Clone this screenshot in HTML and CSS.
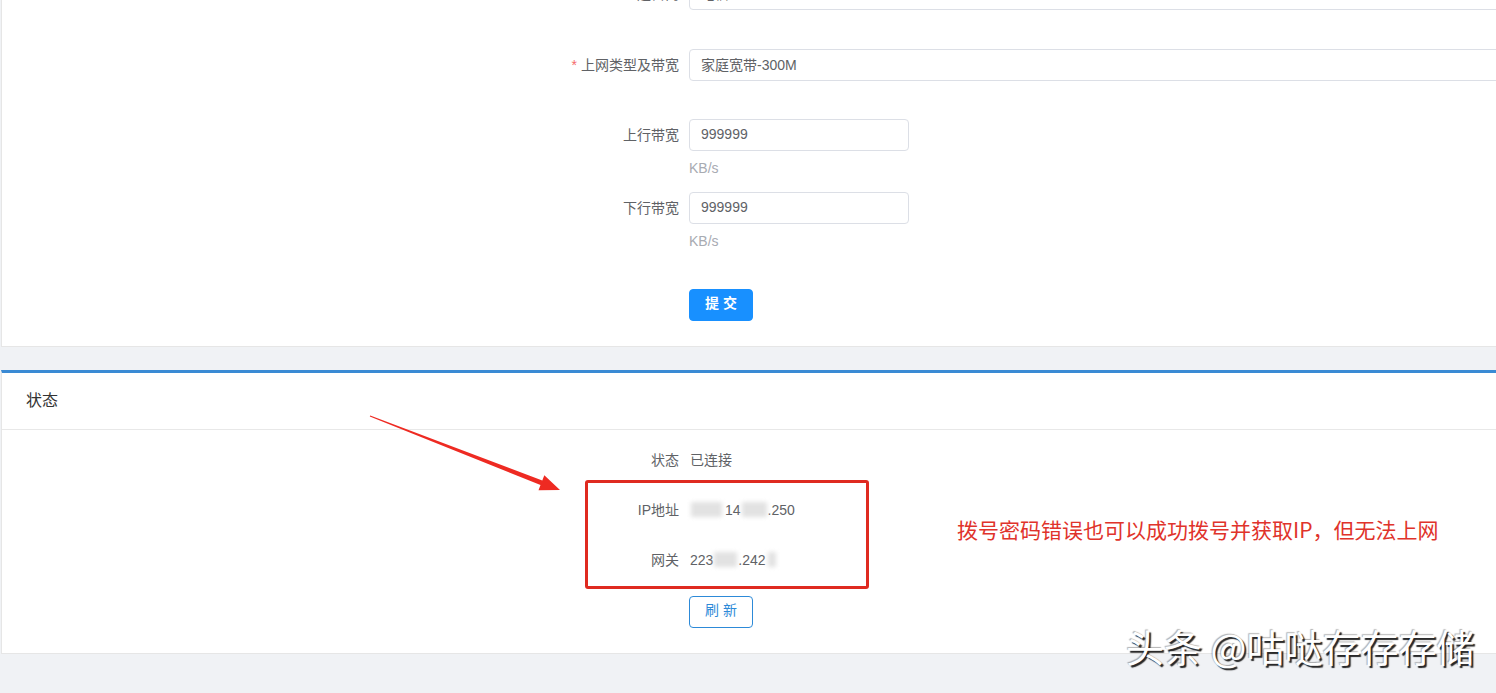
FILE: index.html
```html
<!DOCTYPE html>
<html lang="zh-CN">
  <head>
    <meta charset="UTF-8" />
    <meta name="viewport" content="width=device-width, initial-scale=1.0" />
    <title>拨号设置</title>
    <link rel="stylesheet" href="styles.css">
  </head>
  <body>
    <div class="page">
      <!-- 拨号表单 -->
      <div class="card card-form">
        <form class="form" onsubmit="return false">
          <div class="form-item item-first">
            <label class="form-label">运营商</label>
            <input class="input input-long" type="text" value="电信" />
          </div>
          <div class="form-item item-type">
            <label class="form-label"><span class="required">*</span>上网类型及带宽</label>
            <input class="input input-long" type="text" value="家庭宽带-300M" />
          </div>
          <div class="form-item item-up">
            <label class="form-label">上行带宽</label>
            <div class="form-field">
              <input class="input input-short" type="text" value="999999" />
              <div class="help">KB/s</div>
            </div>
          </div>
          <div class="form-item item-down">
            <label class="form-label">下行带宽</label>
            <div class="form-field">
              <input class="input input-short" type="text" value="999999" />
              <div class="help">KB/s</div>
            </div>
          </div>
          <div class="form-item">
            <span class="form-label"></span>
            <button class="btn btn-primary">提 交</button>
          </div>
        </form>
      </div>

      <!-- 状态 -->
      <div class="card card-status">
        <div class="card-header">状态</div>
        <div class="card-body">
          <div class="status-row">
            <span class="form-label">状态</span>
            <span class="status-value">已连接</span>
          </div>
          <div class="status-row">
            <span class="form-label">IP地址</span>
            <span class="status-value"><i class="mask m1"></i>14<i class="mask m2"></i>.250</span>
          </div>
          <div class="status-row row-last">
            <span class="form-label">网关</span>
            <span class="status-value">223<i class="mask m3"></i>.242<i class="mask m4"></i></span>
          </div>
          <div class="status-row row-action">
            <span class="form-label"></span>
            <button class="btn btn-plain">刷 新</button>
          </div>
        </div>
      </div>
    </div>

    <!-- 标注 -->
    <svg class="arrow" width="1496" height="693" viewBox="0 0 1496 693">
      <polygon fill="#ee2a22" points="370.2,415.4 542.3,480.4 544.3,475.2 560,490 538.5,490.2 540.5,485 369.8,416.6" />
    </svg>
    <div class="note-box"></div>
    <div class="note-text">拨号密码错误也可以成功拨号并获取IP，但无法上网</div>
    <div class="watermark">头条 @咕哒存存存储</div>
  </body>
</html>
```

FILE: styles.css
```css
html, body {
  margin: 0;
  height: 693px;
  overflow: hidden;
}
body {
  position: relative;
  background: #f0f2f5;
  font-family: "Liberation Sans", "Noto Sans CJK SC", sans-serif;
  font-size: 14px;
  color: #606266;
}
.page {
  width: 1560px;
  padding-left: 1px;
}
.card {
  background: #fff;
  border: 1px solid #e6e6e6;
}
.card-form {
  margin-top: -46px;
  padding: 23px 0 25px;
}
.form {
  padding-left: 567px;
}
.form-item {
  display: flex;
  align-items: flex-start;
}
.form-label {
  width: 120px;
  flex: none;
  box-sizing: border-box;
  padding-right: 10px;
  text-align: right;
  line-height: 32px;
  color: #606266;
}
.required {
  color: #f56c6c;
  margin-right: 4px;
}
.item-first {
  margin-bottom: 39px;
}
.item-type {
  margin-bottom: 38px;
}
.item-up {
  margin-bottom: 14px;
}
.item-down {
  margin-bottom: 38px;
}
.input {
  box-sizing: border-box;
  height: 32px;
  margin: 0;
  padding: 0 11px 2px;
  border: 1px solid #dcdfe6;
  border-radius: 4px;
  font-family: inherit;
  font-size: 14px;
  color: #606266;
  background: #fff;
  outline: none;
}
.input-long {
  width: 900px;
}
.input-short {
  width: 220px;
}
.help {
  margin-top: 7px;
  line-height: 20px;
  color: #a8abb2;
}
.btn {
  box-sizing: border-box;
  width: 64px;
  height: 32px;
  padding: 0 0 6px;
  border-radius: 4px;
  font-family: inherit;
  font-size: 14px;
  cursor: pointer;
}
.btn-primary {
  border: 1px solid #1890ff;
  background: #1890ff;
  color: #fff;
  font-weight: bold;
}
.btn-plain {
  border: 1px solid #2d8ad8;
  background: #fff;
  color: #2d8ad8;
}

.card-status {
  margin-top: 23px;
  border-top: 3px solid #3a8ad4;
  padding-bottom: 25px;
}
.card-header {
  height: 56px;
  line-height: 55px;
  padding-left: 24px;
  font-size: 16px;
  color: #333;
  border-bottom: 1px solid #e8e8e8;
}
.card-body {
  padding: 18px 0 0 567px;
}
.status-row {
  display: flex;
  align-items: center;
  height: 24px;
  margin-bottom: 26px;
}
.status-row.row-last {
  margin-bottom: 24px;
}
.status-row.row-action {
  height: 32px;
  margin-bottom: 0;
}
.status-row .form-label {
  line-height: 24px;
}
.status-value {
  padding-left: 1px;
  color: #606266;
  line-height: 24px;
}
.mask {
  display: inline-block;
  height: 15px;
  vertical-align: -2px;
  background: #e2e2e2;
  filter: blur(2px);
}
.m1 { width: 31px; margin: 0 3px 0 1px; }
.m2 { width: 25px; margin: 0 1px; }
.m3 { width: 23px; margin: 0 1px; }
.m4 { width: 8px; margin-left: 2px; }

/* annotation overlay */
.arrow {
  position: absolute;
  left: 0;
  top: 0;
  pointer-events: none;
}
.note-box {
  position: absolute;
  left: 585px;
  top: 480px;
  width: 278px;
  height: 103px;
  border: 3px solid #df2a20;
  border-radius: 3px;
}
.note-text {
  position: absolute;
  left: 957px;
  top: 515px;
  font-family: "Noto Sans CJK SC", sans-serif;
  font-size: 21px;
  line-height: 28px;
  color: #e0332b;
}
.watermark {
  position: absolute;
  left: 1126px;
  top: 621px;
  font-family: "Noto Sans CJK SC", sans-serif;
  font-size: 38px;
  line-height: 50px;
  color: #fff;
  text-shadow: 2px 2px 1px rgba(0, 0, 0, 0.85), -1px -1px 1px rgba(0, 0, 0, 0.3);
}
```
